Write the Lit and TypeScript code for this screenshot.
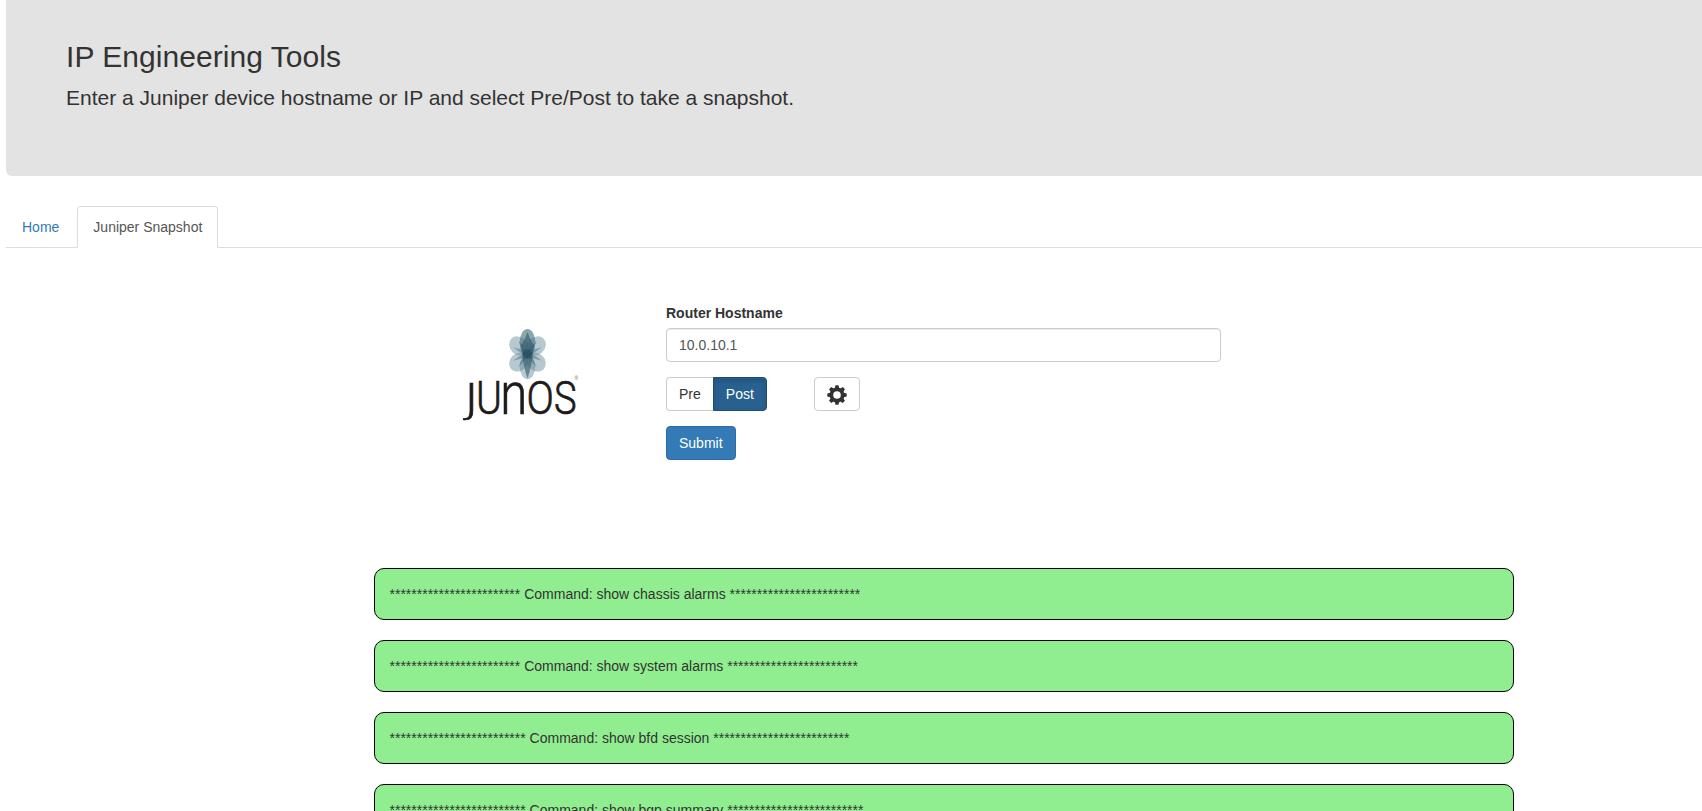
import { LitElement, html, css, svg } from "lit";
import { customElement, state } from "lit/decorators.js";

@customElement("junos-logo")
class JunosLogo extends LitElement {
  static styles = css`
    :host { display: block; width: 130px; height: 100px; }
    svg { display: block; }
    text { font-family: "Roboto", sans-serif; font-weight: 300; fill: #1d1a1b; stroke: #1d1a1b; stroke-width: 0.7px; }
    .j { font-family: "DejaVu Sans", sans-serif; font-weight: 200; }
    .reg { font-family: "Liberation Sans", sans-serif; font-weight: 400; fill: #666; stroke: none; }
  `;
  render() {
    return html`<svg width="130" height="100" viewBox="0 0 130 100" role="img" aria-label="Junos">
      <g transform="translate(74.5 30)">
        ${[47, 133, 227, 313].map((a) => svg`<ellipse cx="0" cy="-11.8" rx="8.8" ry="10.4" fill="#5f8796" fill-opacity=".45" transform="rotate(${a})"></ellipse>`)}
        <ellipse cx="0" cy="12.5" rx="7.8" ry="12.8" fill="#5f8796" fill-opacity=".45"></ellipse>
        <ellipse cx="0" cy="-11.5" rx="7.9" ry="13.5" fill="#4a7484" fill-opacity=".65"></ellipse>
        ${[35, 65, 115, 145, 215, 245, 295, 325].map((a) => svg`<path d="M-2.8 0L0 -16L2.8 0Z" fill="#41707f" fill-opacity=".5" transform="rotate(${a})"></path>`)}
        <path d="M-6.5 -9Q-3.5 -12 0 -22Q3.5 -12 6.5 -9Q4 14 0 24.5Q-4 14 -6.5 -9Z" fill="#2c5364" fill-opacity=".58"></path>
        <circle cx="0" cy="0" r="4.6" fill="#24495a" fill-opacity=".6"></circle>
      </g>
      <text class="j" font-size="43" transform="translate(10.3 89.3) scale(1.3 .96)">J</text>
      <text font-size="47" transform="translate(23 90) scale(.84 1)">U</text>
      <text font-size="60" transform="translate(47.3 90) scale(.82 1)">n</text>
      <text font-size="47" transform="translate(73.6 90) scale(.86 1)">O</text>
      <text font-size="47" transform="translate(101 90) scale(.81 1)">S</text>
      <text class="reg" font-size="5" x="121.5" y="56">®</text>
    </svg>`;
  }
}

@customElement("app-root")
class AppRoot extends LitElement {
  static styles = css`
    :host { display: block; height: 811px; overflow: hidden; background: #fff; color: #333; font: 14px/20px "Liberation Sans", Arial, sans-serif; }
    * { box-sizing: border-box; }
    .page { padding-left: 6px; }
    .hero { height: 176px; padding: 40px 60px; background: #e3e3e3; border-bottom-left-radius: 6px; }
    h2 { margin: 0 0 10px; font-size: 30px; line-height: 33px; font-weight: 400; letter-spacing: 0.05px; }
    .hero p { margin: 0; font-size: 21px; line-height: 29.4px; }
    .tabs { display: flex; gap: 2px; margin-top: 30px; height: 42px; border-bottom: 1px solid #ddd; }
    .tab { height: 42px; padding: 10px 15px; border: 1px solid transparent; border-radius: 4px 4px 0 0; color: #337ab7; text-decoration: none; }
    .tab.active { color: #555; background: #fff; border-color: #ddd #ddd #fff; }
    .panel { display: flex; padding: 55px 0 0 447px; height: 320px; }
    .logo { width: 213px; padding-top: 21px; }
    .form { width: 555px; }
    label { display: block; margin-bottom: 5px; font-weight: 700; }
    input { display: block; width: 100%; height: 34px; padding: 6px 12px; border: 1px solid #ccc; border-radius: 4px; font: inherit; color: #555; background: #fff; box-shadow: inset 0 1px 1px rgba(0, 0, 0, 0.075); outline: none; }
    .row { display: flex; margin: 15px 0; gap: 47px; }
    .group { display: flex; }
    button { height: 34px; padding: 6px 12px; border: 1px solid #ccc; border-radius: 4px; background: #fff; color: #333; font: inherit; line-height: 20px; }
    .group button:first-child { border-radius: 4px 0 0 4px; border-right: 0; }
    .group button:last-child { border-radius: 0 4px 4px 0; }
    .group button.on { color: #fff; background: #286090; border-color: #204d74; box-shadow: inset 0 3px 5px rgba(0, 0, 0, 0.125); }
    .gear { width: 46px; display: flex; align-items: center; justify-content: center; padding: 2px 0 0; }
    .submit { color: #fff; background: #337ab7; border-color: #2e6da4; }
    .results { display: flex; flex-direction: column; gap: 20px; width: 1140px; margin-left: 367.5px; }
    .result { height: 52px; padding: 15px; border: 1px solid #000; border-radius: 10px; background: #90ee90; white-space: nowrap; }
  `;

  @state() mode = "Post";

  commands = [
    { name: "show chassis alarms", stars: 24 },
    { name: "show system alarms", stars: 24 },
    { name: "show bfd session", stars: 25 },
    { name: "show bgp summary", stars: 25 },
  ];

  render() {
    return html`<div class="page">
      <header class="hero">
        <h2>IP Engineering Tools</h2>
        <p>Enter a Juniper device hostname or IP and select Pre/Post to take a snapshot.</p>
      </header>
      <nav class="tabs"><a class="tab">Home</a><a class="tab active">Juniper Snapshot</a></nav>
      <section class="panel">
        <div class="logo"><junos-logo></junos-logo></div>
        <div class="form">
          <label for="host">Router Hostname</label>
          <input id="host" value="10.0.10.1">
          <div class="row">
            <div class="group">
              ${["Pre", "Post"].map((m) => html`<button class=${this.mode === m ? "on" : ""} @click=${() => (this.mode = m)}>${m}</button>`)}
            </div>
            <button class="gear" aria-label="Settings">
              <svg width="20" height="20" viewBox="-10 -10 20 20" fill="#333">
                ${[0, 45, 90, 135, 180, 225, 270, 315].map((a) => svg`<path d="M-2.4 -6L-1.5 -9.7H1.5L2.4 -6Z" transform="rotate(${a})"></path>`)}
                <circle r="5.6" fill="none" stroke="#333" stroke-width="3.6"></circle>
              </svg>
            </button>
          </div>
          <button class="submit">Submit</button>
        </div>
      </section>
      <section class="results">
        ${this.commands.map((c) => html`<div class="result">${"*".repeat(c.stars)} Command: ${c.name} ${"*".repeat(c.stars)}</div>`)}
      </section>
    </div>`;
  }
}
